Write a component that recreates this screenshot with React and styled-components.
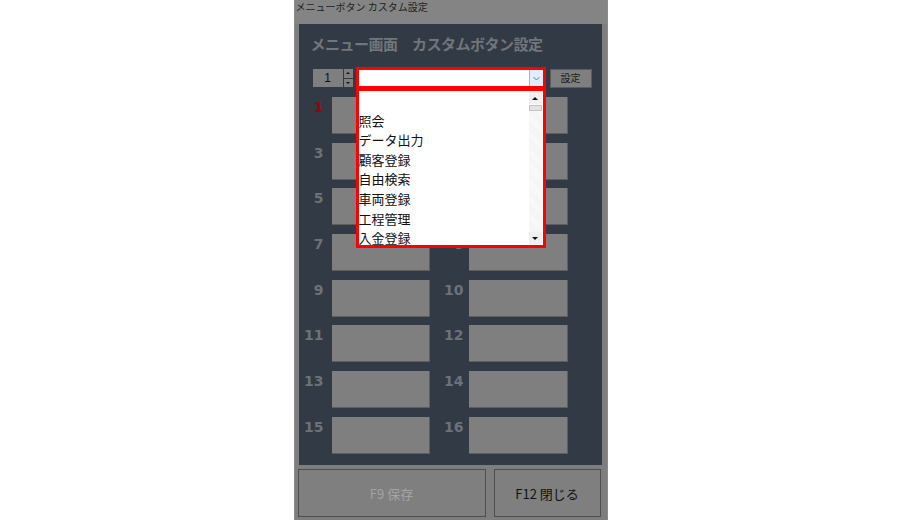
import styled, { createGlobalStyle } from 'styled-components';

const GlobalStyle = createGlobalStyle`
  html, body {
    margin: 0;
    padding: 0;
    background: #ffffff;
  }
`;

const jp = `"Noto Sans CJK JP", "Noto Sans", sans-serif`;

const Page = styled.div`
  width: 900px;
  height: 520px;
  display: flex;
  justify-content: center;
  background: #ffffff;
  overflow: hidden;
`;

const Window = styled.div`
  width: 314px;
  height: 520px;
  margin-left: 1px;
  display: flex;
  flex-direction: column;
  background: #7e7e7e;
  box-sizing: border-box;
  border-left: 1px solid #8c8c8c;
  border-right: 1px solid #8c8c8c;
`;

const TitleBar = styled.div`
  height: 24px;
  padding-left: 1px;
  font-family: ${jp};
  font-size: 10px;
  line-height: 14px;
  color: #1e1e1e;
  background: #848484;
`;

const Panel = styled.div`
  position: relative;
  height: 441px;
  margin: 0 5px 0 4px;
  background: #323a45;
  display: flex;
  flex-direction: column;
`;

const Heading = styled.div`
  margin: 9px 0 0 12px;
  height: 22px;
  font-family: ${jp};
  font-weight: 700;
  font-size: 15px;
  letter-spacing: -0.5px;
  line-height: 22px;
  color: #727579;
  white-space: pre;
`;

const Controls = styled.div`
  margin-top: 12px;
  height: 22px;
  display: flex;
  align-items: center;
  padding-left: 14px;
`;

const SpinBox = styled.div`
  width: 30px;
  height: 18px;
  background: #7f7f7f;
  font-family: "Liberation Sans", sans-serif;
  font-size: 12px;
  line-height: 18px;
  text-align: center;
  color: #111;
`;

const SpinArrows = styled.div`
  width: 9px;
  height: 18px;
  margin-left: 1px;
  display: flex;
  flex-direction: column;
  gap: 1px;
`;

const SpinArrow = styled.div`
  flex: 1;
  background: #7f7f7f;
  display: flex;
  align-items: center;
  justify-content: center;
  &::after {
    content: '';
    border-left: 2px solid transparent;
    border-right: 2px solid transparent;
    ${(p) => (p.$down ? 'border-top: 2px solid #111;' : 'border-bottom: 2px solid #111;')}
  }
`;

const Combo = styled.div`
  width: 190px;
  height: 22px;
  margin-left: 3px;
  box-sizing: border-box;
  border: 3px solid #ff0000;
  background: #ffffff;
  display: flex;
  justify-content: flex-end;
`;

const ComboArrow = styled.div`
  width: 13px;
  height: 100%;
  background: #dfeefc;
  border-left: 1px solid #8dbbe9;
  display: flex;
  align-items: center;
  justify-content: center;
`;

const SetButton = styled.div`
  width: 42px;
  height: 19px;
  margin-left: 4px;
  box-sizing: border-box;
  background: #7f7f7f;
  border: 1px solid #5c5c5c;
  font-family: ${jp};
  font-size: 10px;
  line-height: 16px;
  text-align: center;
  color: #1a1a1a;
`;

const Grid = styled.div`
  margin-top: 8px;
  display: grid;
  grid-template-columns: 33px 98px 39px 99px;
  grid-auto-rows: 37px;
  row-gap: 8.7px;
`;

const Label = styled.div`
  text-align: right;
  padding-right: ${(p) => (p.$right ? 5 : 8)}px;
  font-family: "DejaVu Sans", sans-serif;
  font-weight: 700;
  font-size: 14px;
  line-height: 20px;
  color: ${(p) => (p.$active ? '#8b0a0a' : '#6d7277')};
`;

const Cell = styled.div`
  background: #7f7f7f;
  box-sizing: border-box;
  border-right: 1px solid #5e5e5e;
  border-bottom: 1px solid #5e5e5e;
`;

const Dropdown = styled.div`
  position: absolute;
  left: 57px;
  top: 64px;
  width: 190px;
  height: 160px;
  box-sizing: border-box;
  border: 3px solid #ff0000;
  background: #ffffff;
  display: flex;
  overflow: hidden;
`;

const List = styled.div`
  flex: 1;
  display: flex;
  flex-direction: column;
`;

const Item = styled.div`
  height: 19.6px;
  flex-shrink: 0;
  font-family: ${jp};
  font-size: 13px;
  line-height: 19.6px;
  color: #111;
  white-space: nowrap;
`;

const ScrollBar = styled.div`
  width: 13px;
  margin-right: 1px;
  display: flex;
  flex-direction: column;
  background: repeating-linear-gradient(45deg, #f3f3f3 0 1px, #fbfbfb 1px 2px);
`;

const ScrollBtn = styled.div`
  height: 12px;
  margin-top: ${(p) => (p.$down ? 'auto' : '1px')};
  margin-bottom: ${(p) => (p.$down ? '1px' : '0')};
  background: #f0f0f0;
  display: flex;
  align-items: center;
  justify-content: center;
  &::after {
    content: '';
    border-left: 3px solid transparent;
    border-right: 3px solid transparent;
    ${(p) => (p.$down ? 'border-top: 3px solid #111;' : 'border-bottom: 3px solid #111;')}
  }
`;

const Thumb = styled.div`
  height: 6px;
  margin-top: 1px;
  background: #e2e2e2;
  border: 1px solid #c4c4c4;
  box-sizing: border-box;
`;

const Footer = styled.div`
  display: flex;
  gap: 8px;
  margin: 4px 5px 0 3px;
`;

const FooterButton = styled.div`
  width: ${(p) => p.$width}px;
  height: 48px;
  box-sizing: border-box;
  background: #7f7f7f;
  border: 1px solid #4e4e4e;
  display: flex;
  align-items: center;
  justify-content: center;
  font-family: ${jp};
  font-size: 13px;
  color: ${(p) => (p.$disabled ? '#a3a3a3' : '#111111')};
`;

const items = ['', '照会', 'データ出力', '顧客登録', '自由検索', '車両登録', '工程管理', '入金登録'];

function App() {
  const rows = Array.from({ length: 8 }, (_, i) => [i * 2 + 1, i * 2 + 2]);
  return (
    <Page>
      <GlobalStyle />
      <Window>
        <TitleBar>メニューボタン カスタム設定</TitleBar>
        <Panel>
          <Heading>メニュー画面　カスタムボタン設定</Heading>
          <Controls>
            <SpinBox>1</SpinBox>
            <SpinArrows>
              <SpinArrow />
              <SpinArrow $down />
            </SpinArrows>
            <Combo>
              <ComboArrow>
                <svg width="7" height="5" viewBox="0 0 7 5">
                  <path d="M0.5 1 L3.5 4 L6.5 1" fill="none" stroke="#6b7a8c" strokeWidth="1" />
                </svg>
              </ComboArrow>
            </Combo>
            <SetButton>設定</SetButton>
          </Controls>
          <Grid>
            {rows.map(([a, b]) => [
              <Label key={'l' + a} $active={a === 1}>{a}</Label>,
              <Cell key={'c' + a} />,
              <Label key={'l' + b} $right>{b}</Label>,
              <Cell key={'c' + b} />,
            ])}
          </Grid>
          <Dropdown>
            <List>
              {items.map((t, i) => (
                <Item key={i}>{t}</Item>
              ))}
            </List>
            <ScrollBar>
              <ScrollBtn />
              <Thumb />
              <ScrollBtn $down />
            </ScrollBar>
          </Dropdown>
        </Panel>
        <Footer>
          <FooterButton $width={188} $disabled>F9 保存</FooterButton>
          <FooterButton $width={107}>F12 閉じる</FooterButton>
        </Footer>
      </Window>
    </Page>
  );
}

export default App;
